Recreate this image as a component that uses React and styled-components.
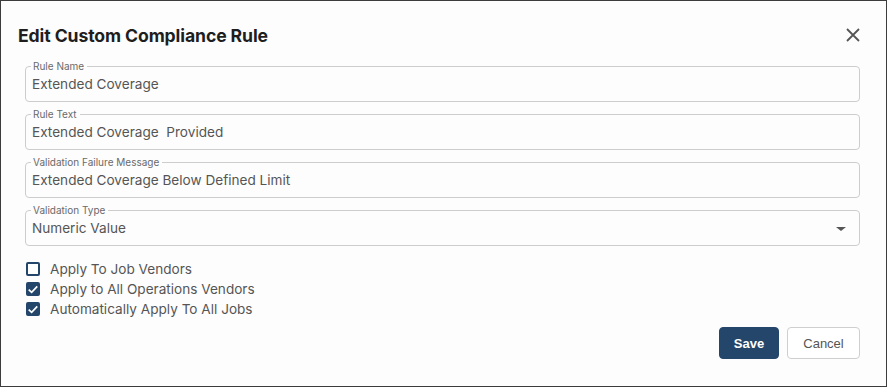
import React from 'react'
import styled, { createGlobalStyle } from 'styled-components'

const GlobalStyle = createGlobalStyle`
  html, body {
    margin: 0;
    padding: 0;
    background: #fff;
  }
  * {
    box-sizing: border-box;
  }
`

const Dialog = styled.div`
  width: 887px;
  height: 387px;
  border: 1px solid #3c3c3c;
  background: #fdfdfd;
  padding: 20px 26px 27px 24px;
  display: flex;
  flex-direction: column;
  font-family: Inter, 'Noto Sans', sans-serif;
`

const Header = styled.div`
  height: 28px;
  margin-left: -7px;
  display: flex;
  align-items: center;
  justify-content: space-between;
`

const Title = styled.h2`
  margin: 0;
  font-size: 17.6px;
  font-weight: 700;
  color: #1e1e1e;
  letter-spacing: -0.1px;
`

const CloseButton = styled.button`
  width: 14px;
  height: 14px;
  padding: 0;
  border: none;
  background: transparent;
  display: flex;
  cursor: pointer;
`

const Form = styled.div`
  margin-top: 17px;
  display: flex;
  flex-direction: column;
  gap: 12px;
`

const Field = styled.div`
  position: relative;
  height: 36px;
  border: 1px solid #cdcdcd;
  border-radius: 4px;
  display: flex;
  align-items: center;
  padding: 0 28px 1px 6px;
`

const FieldLabel = styled.span`
  position: absolute;
  top: -7px;
  left: 5px;
  padding: 0 3px 0 2px;
  background: #fdfdfd;
  font-size: 10px;
  line-height: 12px;
  color: #6a6a6a;
`

const FieldValue = styled.span`
  font-size: 13.6px;
  color: #555;
  flex: 1;
`

const Caret = styled.span`
  position: absolute;
  right: 13px;
  top: 16px;
  width: 0;
  height: 0;
  border-left: 5px solid transparent;
  border-right: 5px solid transparent;
  border-top: 4px solid #555;
`

const CheckList = styled.div`
  margin-top: 13px;
  display: flex;
  flex-direction: column;
`

const CheckRow = styled.label`
  height: 20px;
  display: flex;
  align-items: center;
  gap: 10px;
  padding-left: 1px;
  font-size: 13.6px;
  color: #555;
`

const Box = styled.span`
  width: 14px;
  height: 14px;
  border-radius: 2px;
  border: 2px solid #24466b;
  background: ${props => (props.checked ? '#24466b' : '#fff')};
  display: flex;
  align-items: center;
  justify-content: center;
`

const Actions = styled.div`
  margin-top: auto;
  display: flex;
  justify-content: flex-end;
  gap: 8px;
`

const Button = styled.button`
  height: 32px;
  border-radius: 4px;
  font-family: 'Liberation Sans', Arial, sans-serif;
  font-size: 13px;
  cursor: pointer;
  padding: 0;
  width: ${props => (props.primary ? '60px' : '73px')};
  background: ${props => (props.primary ? '#24466b' : '#fff')};
  color: ${props => (props.primary ? '#fff' : '#555')};
  border: 1px solid ${props => (props.primary ? '#24466b' : '#cfcfcf')};
  font-weight: ${props => (props.primary ? 700 : 400)};
`

const fields = [
  { label: 'Rule Name', value: 'Extended Coverage' },
  { label: 'Rule Text', value: 'Extended Coverage\u00a0 Provided' },
  { label: 'Validation Failure Message', value: 'Extended Coverage Below Defined Limit' },
  { label: 'Validation Type', value: 'Numeric Value', select: true }
]

const options = [
  { label: 'Apply To Job Vendors', checked: false },
  { label: 'Apply to All Operations Vendors', checked: true },
  { label: 'Automatically Apply To All Jobs', checked: true }
]

const Check = () => (
  <svg width='11' height='11' viewBox='0 0 11 11'>
    <path d='M0.8 5.6 L4 8.6 L10.2 2' fill='none' stroke='#fff' strokeWidth='1.9' />
  </svg>
)

export default function App () {
  return (
    <>
      <GlobalStyle />
      <Dialog>
        <Header>
          <Title>Edit Custom Compliance Rule</Title>
          <CloseButton aria-label='Close'>
            <svg width='14' height='14' viewBox='0 0 14 14'>
              <path d='M1 1 L13 13 M13 1 L1 13' stroke='#555' strokeWidth='1.8' />
            </svg>
          </CloseButton>
        </Header>
        <Form>
          {fields.map(f => (
            <Field key={f.label}>
              <FieldLabel>{f.label}</FieldLabel>
              <FieldValue>{f.value}</FieldValue>
              {f.select && <Caret />}
            </Field>
          ))}
        </Form>
        <CheckList>
          {options.map(o => (
            <CheckRow key={o.label}>
              <Box checked={o.checked}>{o.checked && <Check />}</Box>
              {o.label}
            </CheckRow>
          ))}
        </CheckList>
        <Actions>
          <Button primary>Save</Button>
          <Button>Cancel</Button>
        </Actions>
      </Dialog>
    </>
  )
}
